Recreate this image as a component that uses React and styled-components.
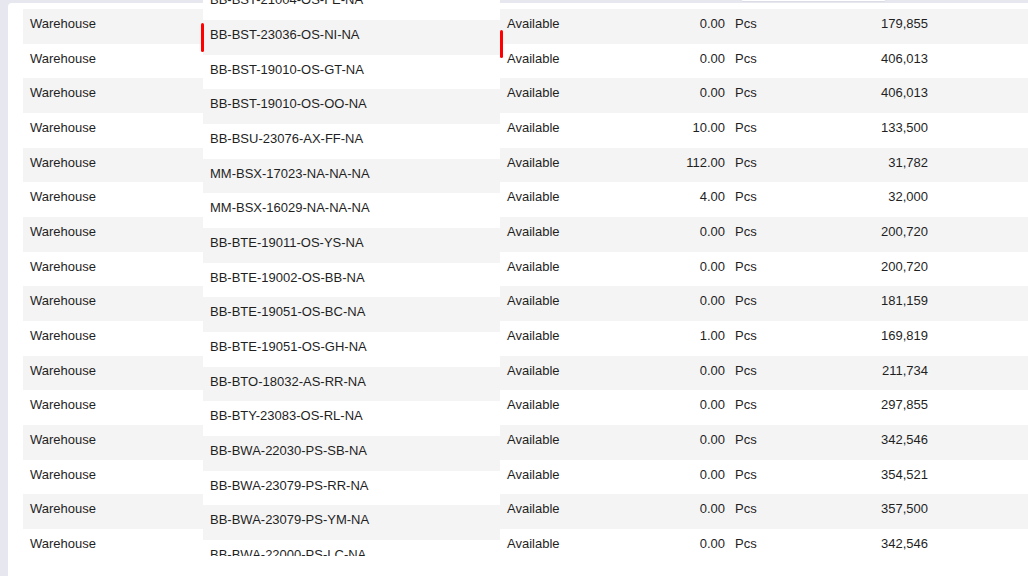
import React from "react";
import styled, { createGlobalStyle } from "styled-components";

const GlobalStyle = createGlobalStyle`
  html, body { margin: 0; padding: 0; }
  body {
    background: #e7e7f0;
    font-family: "Liberation Sans", Arial, sans-serif;
    font-size: 13px;
    color: #1f1f1f;
  }
`;

const ROW_H = 34.67;

const Page = styled.div`
  position: relative;
  width: 1028px;
  height: 576px;
  overflow: hidden;
  display: flex;
  flex-direction: column;
`;

const TopStrip = styled.div`
  height: 3px;
  flex: none;
  padding-left: 740px;
`;

const TopTab = styled.div`
  width: 147px;
  height: 6px;
  margin-top: -4px;
  background: #ffffff;
  border: 1px solid #dcdce6;
  border-radius: 4px;
  box-sizing: border-box;
`;

const Panel = styled.div`
  flex: 1;
  margin-left: 8px;
  background: #ffffff;
  border-top-left-radius: 4px;
  overflow: hidden;
  padding: 6px 0 0 15px;
`;

const Table = styled.div`
  width: 1040px;
  display: flex;
  flex-direction: column;
`;

const Row = styled.div`
  display: grid;
  grid-template-columns: 180px 297px 128px 97px 82px 128px 1fr;
  height: ${ROW_H}px;
  background: ${(p) => (p.$alt ? "#f4f4f4" : "#ffffff")};
`;

const Cell = styled.div`
  padding: 7px 7px 0;
  line-height: 15px;
  white-space: nowrap;
  text-align: ${(p) => (p.$right ? "right" : "left")};
`;

const QtyCell = styled(Cell)`
  text-align: right;
  padding-right: 0;
`;

const UnitCell = styled(Cell)`
  padding-left: 10px;
`;

const Ghost = styled.div`
  position: absolute;
  left: 203px;
  top: 0;
  width: 297px;
  height: 556px;
  overflow: hidden;
`;

const GhostList = styled.div`
  margin-top: ${20 - ROW_H}px;
  display: flex;
  flex-direction: column;
`;

const GhostRow = styled.div`
  height: ${ROW_H}px;
  flex: none;
  padding: 7px 7px 0;
  box-sizing: border-box;
  line-height: 15px;
  white-space: nowrap;
  background: ${(p) => (p.$alt ? "#f4f4f4" : "#ffffff")};
`;

const DropMarker = styled.div`
  position: absolute;
  width: 3px;
  border-radius: 2px;
  background: #ff0000;
`;

const rows = [
  ["0.00", "179,855"],
  ["0.00", "406,013"],
  ["0.00", "406,013"],
  ["10.00", "133,500"],
  ["112.00", "31,782"],
  ["4.00", "32,000"],
  ["0.00", "200,720"],
  ["0.00", "200,720"],
  ["0.00", "181,159"],
  ["1.00", "169,819"],
  ["0.00", "211,734"],
  ["0.00", "297,855"],
  ["0.00", "342,546"],
  ["0.00", "354,521"],
  ["0.00", "357,500"],
  ["0.00", "342,546"],
];

const skus = [
  "BB-BST-21004-OS-FE-NA",
  "BB-BST-23036-OS-NI-NA",
  "BB-BST-19010-OS-GT-NA",
  "BB-BST-19010-OS-OO-NA",
  "BB-BSU-23076-AX-FF-NA",
  "MM-BSX-17023-NA-NA-NA",
  "MM-BSX-16029-NA-NA-NA",
  "BB-BTE-19011-OS-YS-NA",
  "BB-BTE-19002-OS-BB-NA",
  "BB-BTE-19051-OS-BC-NA",
  "BB-BTE-19051-OS-GH-NA",
  "BB-BTO-18032-AS-RR-NA",
  "BB-BTY-23083-OS-RL-NA",
  "BB-BWA-22030-PS-SB-NA",
  "BB-BWA-23079-PS-RR-NA",
  "BB-BWA-23079-PS-YM-NA",
  "BB-BWA-22000-PS-LC-NA",
];

export default function App() {
  return (
    <>
      <GlobalStyle />
      <Page>
        <TopStrip>
          <TopTab />
        </TopStrip>
        <Panel>
          <Table>
            {rows.map(([qty, num], i) => (
              <Row key={i} $alt={i % 2 === 0}>
                <Cell>Warehouse</Cell>
                <Cell />
                <Cell>Available</Cell>
                <QtyCell>{qty}</QtyCell>
                <UnitCell>Pcs</UnitCell>
                <Cell $right>{num}</Cell>
                <Cell />
              </Row>
            ))}
          </Table>
        </Panel>
        <Ghost>
          <GhostList>
            {skus.map((s, i) => (
              <GhostRow key={i} $alt={i % 2 === 1}>
                {s}
              </GhostRow>
            ))}
          </GhostList>
        </Ghost>
        <DropMarker style={{ left: 201, top: 23, height: 29 }} />
        <DropMarker style={{ left: 500, top: 30, height: 28 }} />
      </Page>
    </>
  );
}
